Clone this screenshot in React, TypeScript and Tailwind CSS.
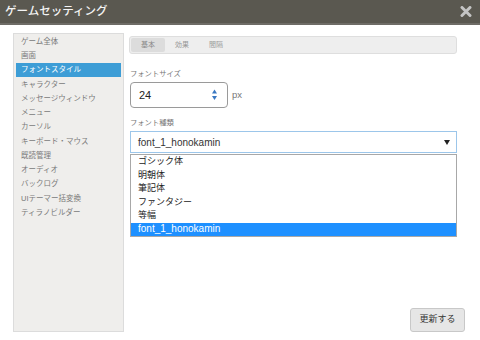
import React from "react";

const menu = [
  "ゲーム全体",
  "画面",
  "フォントスタイル",
  "キャラクター",
  "メッセージウィンドウ",
  "メニュー",
  "カーソル",
  "キーボード・マウス",
  "既読管理",
  "オーディオ",
  "バックログ",
  "UIテーマー括変換",
  "ティラノビルダー",
];

const options = ["ゴシック体", "明朝体", "筆記体", "ファンタジー", "等幅", "font_1_honokamin"];

export default function App() {
  return (
    <div
      className="w-[480px] h-[340px] bg-white overflow-hidden flex flex-col"
      style={{ fontFamily: '"Liberation Sans", "Noto Sans CJK JP", sans-serif' }}
    >
      <div className="h-[25px] shrink-0 bg-[#5a5850] border-b-[2px] border-[#6e6c66] flex items-center justify-between pl-[5px] pr-[8px]">
        <span className="text-[11.5px] text-[#f4f4f4] font-medium leading-none">ゲームセッティング</span>
        <svg width="12" height="11" viewBox="0 0 12 11">
          <path d="M2 1.5 L10 9.5 M10 1.5 L2 9.5" stroke="#c4c4c4" strokeWidth="3" strokeLinecap="round" />
        </svg>
      </div>
      <div className="flex pt-[8px]">
        <div className="ml-[13px] w-[111px] h-[299px] border border-[#dcdcdc] bg-[#efeeec] pt-[0.5px] px-[2px] shrink-0">
          {menu.map((m, i) => (
            <div
              key={m}
              className={
                "h-[14.25px] flex items-center pl-[5px] text-[7.5px] leading-none " +
                (i === 2 ? "bg-[#3d9dd6] text-white" : "text-[#7a7a7a]")
              }
            >
              {m}
            </div>
          ))}
        </div>
        <div className="ml-[5px] w-[336px] h-[299px] flex flex-col">
          <div className="mt-[3px] w-[328px] h-[18px] border border-[#dedede] rounded-[3px] bg-[#eeeeee] flex items-center px-[1px]">
            <div className="w-[34px] h-[14px] bg-[#dcdcdc] rounded-[2px] flex items-center justify-center text-[7px] text-[#888]">基本</div>
            <div className="w-[34px] h-[14px] flex items-center justify-center text-[7px] text-[#999]">効果</div>
            <div className="w-[34px] h-[14px] flex items-center justify-center text-[7px] text-[#999]">間隔</div>
          </div>
          <div className="mt-[15px] ml-[1px] h-[10px] leading-[10px] text-[7.3px] text-[#777]">フォントサイズ</div>
          <div className="mt-[3px] flex items-center">
            <div className="ml-[1px] w-[98px] h-[26px] border-[1.5px] border-[#9a9a9a] rounded-[4px] flex items-center justify-between pl-[8px] pr-[10px] bg-white">
              <span className="text-[11px] text-[#222]">24</span>
              <svg width="5" height="12" viewBox="0 0 5 12">
                <path d="M2.5 0.5 L5 4.5 L0 4.5 Z" fill="#3a78c2" />
                <path d="M0 7 L5 7 L2.5 11 Z" fill="#3a78c2" />
              </svg>
            </div>
            <span className="ml-[4px] text-[9.5px] text-[#777]">px</span>
          </div>
          <div className="mt-[10px] ml-[1px] h-[10px] leading-[10px] text-[7.3px] text-[#777]">フォント種類</div>
          <div className="mt-[3px] relative w-[327px] ml-[1px]">
            <div className="h-[22px] border border-[#9cc6ea] flex items-center justify-between pl-[7px] pr-[6px] bg-white">
              <span className="text-[10px] text-[#333]">font_1_honokamin</span>
              <svg width="6" height="5" viewBox="0 0 6 5">
                <path d="M0 0 L6 0 L3 5 Z" fill="#222" />
              </svg>
            </div>
            <div className="absolute left-0 right-0 top-[23px] h-[83px] border border-[#a8a8a8] bg-white">
              {options.map((o, i) => (
                <div
                  key={o}
                  className={
                    "h-[13.5px] flex items-center pl-[7px] leading-none " +
                    (i === 5 ? "bg-[#1e90ff] text-white text-[10px]" : "text-[#222] text-[9px]")
                  }
                >
                  {o}
                </div>
              ))}
            </div>
          </div>
          <button className="mt-auto self-end w-[55px] h-[24px] border border-[#c8c8c8] rounded-[3px] bg-[#e6e6e6] text-[9px] text-[#333] flex items-center justify-center">
            更新する
          </button>
        </div>
      </div>
    </div>
  );
}
